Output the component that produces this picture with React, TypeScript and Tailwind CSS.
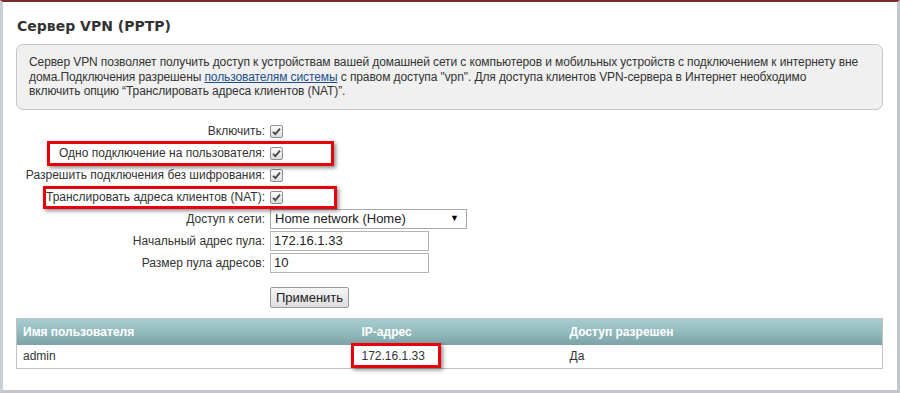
import React from 'react';

const FONT = "font-['Liberation_Sans',Arial,sans-serif]";

function Check() {
  return (
    <span className="inline-flex items-center justify-center w-[13px] h-[13px] rounded-[2px] border border-[#8f8f8f] bg-gradient-to-b from-[#fdfdfd] to-[#dcdcdc]">
      <svg width="9" height="9" viewBox="0 0 9 9">
        <path d="M1 4.8 L3.4 7.2 L8 1.6" fill="none" stroke="#4a4a4a" strokeWidth="1.9" />
      </svg>
    </span>
  );
}

function Row({ label, children }: { label: string; children: React.ReactNode }) {
  return (
    <div className="flex items-center h-[22px]">
      <div className="w-[250px] text-right text-[12px] text-[#333] pr-[1px] whitespace-nowrap">{label}</div>
      <div className="pl-[4px] flex items-center">{children}</div>
    </div>
  );
}

function RedBox({ className }: { className: string }) {
  return (
    <div className={`absolute border-[3px] border-[#e8000b] shadow-[2px_2px_4px_rgba(0,0,0,0.45)] ${className}`} />
  );
}

export default function App() {
  return (
    <div className={`relative w-[900px] h-[393px] bg-white overflow-hidden ${FONT} border-t-2 border-t-[#7d2b2b] border-l-[3px] border-l-[#c9ced3] border-r-[3px] border-r-[#c3c7cc] border-b-[3px] border-b-[#c3c7cc]`}>
      <div className="pl-[13px] pr-[14px]">
        <h1 className="pt-[14px] h-[42px] font-['DejaVu_Sans',Verdana,sans-serif] font-bold text-[14px] text-[#333] leading-[20px] pl-[1px]">
          Сервер VPN (PPTP)
        </h1>

        {/* Описание */}
        <div className="h-[66px] rounded-[7px] border border-[#c6c6c6] bg-[#f0f0f0] px-[12px] pt-[10px] text-[12px] leading-[14.5px] text-[#333] tracking-[-0.1px]">
          <div className="whitespace-nowrap">
            Сервер VPN позволяет получить доступ к устройствам вашей домашней сети с компьютеров и мобильных устройств с подключением к интернету вне
          </div>
          <div className="whitespace-nowrap">
            дома.Подключения разрешены <a className="underline text-[#1f4e8c]">пользователям системы</a> с правом доступа "vpn". Для доступа клиентов VPN-сервера в Интернет необходимо
          </div>
          <div className="whitespace-nowrap">включить опцию “Транслировать адреса клиентов (NAT)”.</div>
        </div>

        {/* Форма */}
        <div className="mt-[10px]">
          <Row label="Включить:"><Check /></Row>
          <Row label="Одно подключение на пользователя:"><Check /></Row>
          <Row label="Разрешить подключения без шифрования:"><Check /></Row>
          <Row label="Транслировать адреса клиентов (NAT):"><Check /></Row>
          <Row label="Доступ к сети:">
            <div className="w-[197px] h-[20px] border border-[#a9a9a9] bg-white flex items-center justify-between pl-[4px] pr-[7px] text-[13px] text-[#222]">
              <span>Home network (Home)</span>
              <span className="text-[9px] text-black">▼</span>
            </div>
          </Row>
          <Row label="Начальный адрес пула:">
            <div className="w-[159px] h-[20px] border border-[#b5b5b5] bg-white flex items-center pl-[3px] text-[13px] text-[#222]">172.16.1.33</div>
          </Row>
          <Row label="Размер пула адресов:">
            <div className="w-[159px] h-[20px] border border-[#b5b5b5] bg-white flex items-center pl-[3px] text-[13px] text-[#222]">10</div>
          </Row>
          <div className="pl-[254px] mt-[11px]">
            <button className="w-[79px] h-[21px] rounded-[2px] border border-[#9a9a9a] bg-gradient-to-b from-[#f6f6f6] to-[#dddddd] text-[13px] text-[#222]">
              Применить
            </button>
          </div>
        </div>

        {/* Таблица */}
        <table className="mt-[9px] w-[867px] border-collapse border border-[#c2c2c2] text-[12px] table-fixed">
          <thead>
            <tr className="h-[26px] bg-gradient-to-b from-[#a8cdd1] via-[#93babd] to-[#7ca2a5] text-white text-left">
              <th className="w-[339px] pl-[6px] font-bold">Имя пользователя</th>
              <th className="w-[208px] pl-[6px] font-bold">IP-адрес</th>
              <th className="pl-[6px] font-bold">Доступ разрешен</th>
            </tr>
          </thead>
          <tbody>
            <tr className="h-[24px] text-[#333]">
              <td className="pl-[6px]">admin</td>
              <td className="pl-[6px]">172.16.1.33</td>
              <td className="pl-[6px]">Да</td>
            </tr>
          </tbody>
        </table>
      </div>

      <RedBox className="left-[44px] top-[139px] w-[287px] h-[25px]" />
      <RedBox className="left-[40px] top-[184px] w-[294px] h-[23px]" />
      <RedBox className="left-[348px] top-[341px] w-[90px] h-[25px]" />
    </div>
  );
}
